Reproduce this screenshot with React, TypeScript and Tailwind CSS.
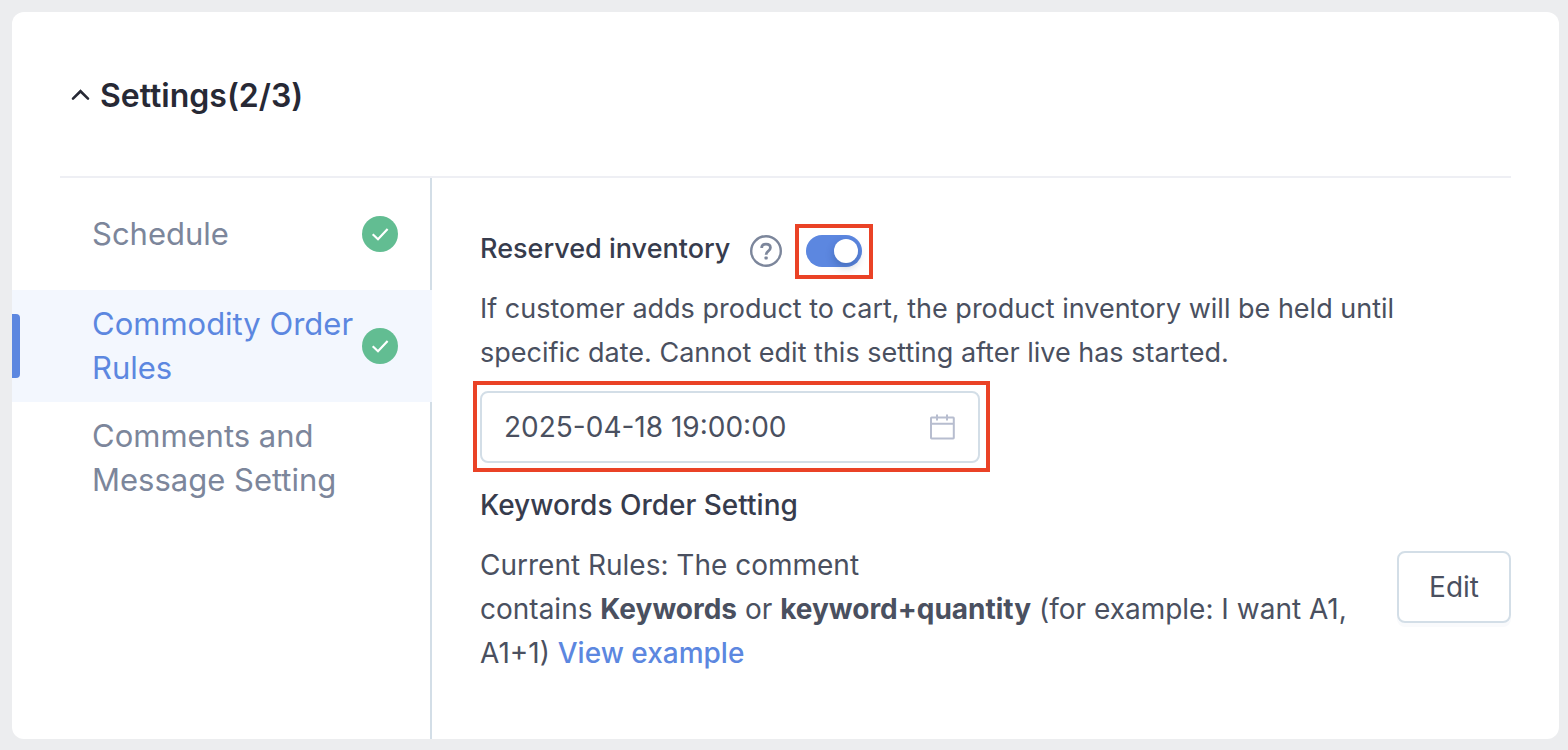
import { useState } from "react";

function CheckBadge() {
  return (
    <svg className="size-9 shrink-0" viewBox="0 0 36 36" fill="none" aria-hidden="true">
      <circle cx="18" cy="18" r="18" fill="#62bd92" />
      <path d="M10.7 18.2 L16 23.2 L25.6 13" stroke="#fff" strokeWidth="2.2" />
    </svg>
  );
}

function HelpIcon() {
  return (
    <svg className="size-8" viewBox="0 0 32 32" fill="none" stroke="#7c869b" aria-hidden="true">
      <circle cx="16" cy="16" r="14.8" strokeWidth="2.4" />
      <path
        d="M11.7 12.9 C11.7 10.4 13.4 9.1 16 9.1 C18.7 9.1 20.4 10.5 20.4 12.7 C20.4 14.6 19.3 15.4 18 16.3 C16.6 17.3 16.1 17.9 16.1 19.8"
        strokeWidth="2.8"
      />
      <rect x="14.5" y="21.4" width="3.2" height="3.2" rx="0.8" fill="#7c869b" stroke="none" />
    </svg>
  );
}

function CalendarIcon() {
  return (
    <svg className="size-7 shrink-0" viewBox="0 0 28 28" fill="none" stroke="#b7bdcf" strokeWidth="2" aria-hidden="true">
      <rect x="3" y="4.6" width="22.8" height="20.8" rx="0.6" />
      <path d="M3 10.8 H25.8 M9 1.6 V7.4 M19 1.6 V7.4" />
    </svg>
  );
}

const steps = [
  { label: "Schedule", done: true },
  { label: "Commodity Order Rules", done: true },
  { label: "Comments and Message Setting", done: false },
];

export default function App() {
  const [open, setOpen] = useState(true);
  const [active, setActive] = useState(1);
  const [reserved, setReserved] = useState(true);
  const [date, setDate] = useState("2025-04-18 19:00:00");

  return (
    <div className="flex min-h-screen flex-col bg-[#ecedef] pt-3 pr-[9px] pb-[11px] pl-3 font-['Inter','Liberation_Sans',sans-serif] text-[28px] leading-[44px] text-[#4a5060]">
      <section className="flex flex-1 flex-col overflow-hidden rounded-xl bg-white">
        <header className="mx-12 border-b-2 border-[#eeeff4] pt-[62px] pb-[58px]">
          <h1>
            <button
              type="button"
              aria-expanded={open}
              onClick={() => setOpen(!open)}
              className="flex items-center gap-2 pl-2 text-[32px] font-semibold text-[#272935]"
            >
              <svg className="size-6" viewBox="0 0 24 24" fill="none" aria-hidden="true">
                <path
                  d="M5 14.6 L12.5 7.2 L20 14.6"
                  stroke="currentColor"
                  strokeWidth="2.6"
                  strokeLinecap="round"
                />
              </svg>
              Settings(2/3)
            </button>
          </h1>
        </header>

        {open && (
          <div className="flex flex-1">
            <nav aria-label="Settings steps" className="flex w-[420px] shrink-0 flex-col">
              {steps.map((step, i) => (
                <button
                  key={step.label}
                  type="button"
                  onClick={() => setActive(i)}
                  aria-current={i === active ? "step" : undefined}
                  className={
                    i === active
                      ? "relative flex min-h-28 items-center justify-between border-r-2 border-[#f3f7fe] bg-[#f3f7fe] py-3 pr-8 pl-20 text-left text-[31px] text-[#5c87e0]"
                      : "relative flex min-h-28 items-center justify-between border-r-2 border-[#d3dee7] py-3 pr-8 pl-20 text-left text-[31px] text-[#7c869b]"
                  }
                >
                  {i === active && (
                    <span className="absolute top-6 bottom-6 left-0 w-2 rounded-r bg-[#5c87e0]" />
                  )}
                  {step.label}
                  {step.done && <CheckBadge />}
                </button>
              ))}
              <div className="flex-1 border-r-2 border-[#d3dee7]" />
            </nav>

            <main className="min-w-0 flex-1 px-12 pt-[49px] pb-12">
              <div className="flex items-start">
                <label htmlFor="reserved" className="text-[27px] font-medium text-[#373c4d]">
                  Reserved inventory
                </label>
                <div className="flex items-center gap-6 pt-2 pl-5">
                  <button type="button" aria-label="About reserved inventory">
                    <HelpIcon />
                  </button>
                  <div className="relative flex">
                    <input
                      id="reserved"
                      type="checkbox"
                      role="switch"
                      checked={reserved}
                      onChange={(e) => setReserved(e.target.checked)}
                      className="peer h-8 w-14 appearance-none rounded-full bg-[#b7bdcf] checked:bg-[#5c87e0]"
                    />
                    <span className="pointer-events-none absolute top-1 left-1 size-6 rounded-full bg-white shadow-[0_4px_8px_rgba(0,35,80,0.25)] peer-checked:left-7" />
                    <span className="pointer-events-none absolute -inset-x-[11px] -top-[11px] -bottom-3 border-4 border-[#ea4226]" />
                  </div>
                </div>
              </div>

              <p className="mt-4 pr-12 text-[27px]">
                If customer adds product to cart, the product inventory will be held until specific
                date. Cannot edit this setting after live has started.
              </p>

              <div className="relative mt-4 flex h-[72px] max-w-[500px] items-center rounded-lg border-2 border-[#d3dee7] px-[22px]">
                <input
                  type="text"
                  aria-label="Reserved until"
                  value={date}
                  onChange={(e) => setDate(e.target.value)}
                  className="min-w-0 flex-1 bg-transparent outline-none"
                />
                <CalendarIcon />
                <span className="pointer-events-none absolute -top-3 -right-3 -bottom-[11px] -left-[9px] border-4 border-[#ea4226]" />
              </div>

              <h2 className="mt-5 font-medium text-[#373c4d]">Keywords Order Setting</h2>

              <div className="mt-4 flex items-start justify-between gap-12">
                <p>
                  Current Rules: The comment
                  <br />
                  contains <strong className="font-bold">Keywords</strong> or{" "}
                  <strong className="font-bold">keyword+quantity</strong> (for example: I want A1,
                  A1+1){" "}
                  <a href="#example" className="font-medium text-[#5c87e0]">
                    View example
                  </a>
                </p>
                <button
                  type="button"
                  className="mt-2 h-[72px] shrink-0 rounded-lg border-2 border-[#d3dee7] bg-white px-[30px] shadow-[0_4px_0_#f9fafc]"
                >
                  Edit
                </button>
              </div>
            </main>
          </div>
        )}
      </section>
    </div>
  );
}
